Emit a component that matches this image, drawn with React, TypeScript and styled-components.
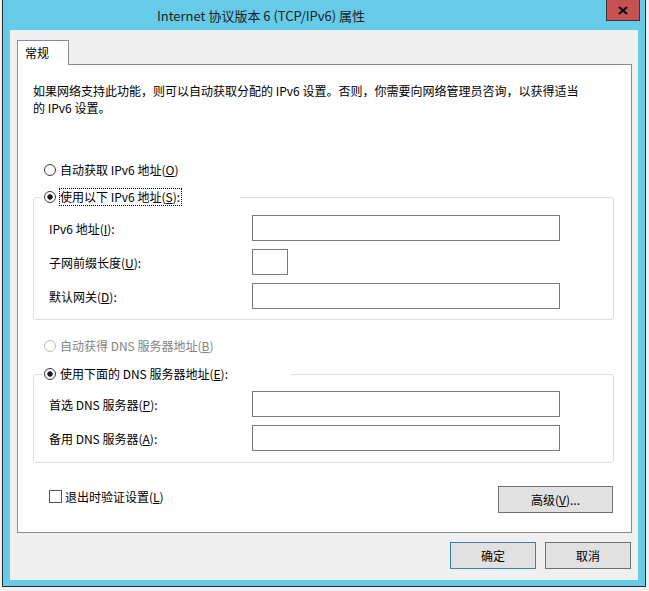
import styled, { createGlobalStyle } from "styled-components";
import type { ReactNode } from "react";

const GlobalStyle = createGlobalStyle`
  html, body {
    margin: 0;
    padding: 0;
    background: #f0f0f0;
  }
  body {
    font-family: "Noto Sans CJK SC", "Microsoft YaHei", sans-serif;
    font-size: 12px;
    color: #000;
  }
`;

const Window = styled.div`
  width: 644px;
  margin-left: 2px;
  box-sizing: border-box;
  background: #65cbe9;
  border: 1px solid #2b2b2b;
  border-top: none;
  padding: 0 7px 6px 7px;
`;

const TitleBar = styled.div`
  display: flex;
  align-items: flex-start;
  height: 30px;
  margin: 0 -7px;
`;

const Title = styled.div`
  flex: 1;
  text-align: center;
  padding: 1px 87px 0 0;
  font-size: 13px;
  line-height: 30px;
  color: #1e1e1e;
  white-space: nowrap;
`;

const CloseButton = styled.div`
  width: 34px;
  height: 21px;
  box-sizing: border-box;
  margin-right: 5px;
  background: #c75050;
  border: 1px solid #3d3535;
  border-top: none;
  display: flex;
  align-items: center;
  justify-content: center;
`;

const Client = styled.div`
  height: 550px;
  box-sizing: border-box;
  background: #f0f0f0;
  padding: 10px 6px 0 7px;
`;

const TabStrip = styled.div`
  display: flex;
  height: 24px;
`;

const Tab = styled.div`
  position: relative;
  z-index: 1;
  width: 52px;
  height: 25px;
  box-sizing: border-box;
  background: #fff;
  border: 1px solid #898c95;
  border-bottom: none;
  padding-left: 7px;
  line-height: 23px;
`;

const Panel = styled.div`
  height: 469px;
  box-sizing: border-box;
  background: #fff;
  border: 1px solid #898c95;
  padding: 17px 18px 0 15px;
`;

const Intro = styled.p`
  margin: 0 0 45px;
  line-height: 17px;
  white-space: nowrap;
`;

const RadioRow = styled.div<{ $inset: number }>`
  display: flex;
  align-items: center;
  height: 18px;
  padding-left: ${(p) => p.$inset}px;
`;

const RadioCircle = styled.span<{ $checked?: boolean; $disabled?: boolean }>`
  width: 12px;
  height: 12px;
  box-sizing: border-box;
  border-radius: 50%;
  border: 1px solid ${(p) => (p.$disabled ? "#bcbcbc" : "#3c3c3c")};
  background: ${(p) =>
    p.$checked
      ? "radial-gradient(circle at center, #1b1b1b 0 2.4px, #fff 3px)"
      : "#fff"};
`;

const RadioText = styled.span<{ $focused?: boolean; $disabled?: boolean }>`
  margin-left: 3px;
  line-height: 16px;
  border: 1px dotted ${(p) => (p.$focused ? "#000" : "transparent")};
  padding-right: 1px;
  color: ${(p) => (p.$disabled ? "#838383" : "#000")};
  white-space: nowrap;
`;

const Key = styled.u`
  text-underline-offset: 1px;
`;

const Group = styled.fieldset<{ $top: number; $bottom: number }>`
  width: 581px;
  box-sizing: border-box;
  margin: 0;
  border: 1px solid #d5dfe5;
  border-radius: 3px;
  padding: ${(p) => p.$top}px 0 ${(p) => p.$bottom}px 15px;
`;

const Legend = styled.legend<{ $width: number }>`
  width: ${(p) => p.$width}px;
  height: 20px;
  box-sizing: border-box;
  padding: 1px 0 0;
  margin-left: -7px;
`;

const FieldGrid = styled.div`
  display: grid;
  grid-template-columns: 203px auto;
  row-gap: 8px;
  align-items: center;
`;

const FieldLabel = styled.span`
  white-space: nowrap;
`;

const TextBox = styled.div<{ $width: number }>`
  width: ${(p) => p.$width}px;
  height: 26px;
  box-sizing: border-box;
  border: 1px solid #7a7a7a;
  background: #fff;
`;

const Spaced = styled.div<{ $top: number }>`
  margin-top: ${(p) => p.$top}px;
`;

const Footer = styled.div`
  display: flex;
  align-items: flex-start;
  justify-content: space-between;
  margin-top: 23px;
  width: 580px;
`;

const CheckRow = styled.label`
  display: flex;
  align-items: center;
  height: 18px;
  margin: 1px 0 0 16px;
  white-space: nowrap;
`;

const CheckBox = styled.span`
  width: 13px;
  height: 13px;
  box-sizing: border-box;
  border: 1px solid #555;
  background: #fff;
  margin-right: 3px;
`;

const Button = styled.div<{ $width: number; $default?: boolean }>`
  width: ${(p) => p.$width}px;
  height: 27px;
  box-sizing: border-box;
  background: #e1e1e1;
  border: 1px solid ${(p) => (p.$default ? "#3c7fb1" : "#707070")};
  display: flex;
  align-items: center;
  justify-content: center;
  white-space: nowrap;
`;

const DialogButtons = styled.div`
  display: flex;
  justify-content: flex-end;
  gap: 9px;
  margin: 9px 1px 0 0;
`;

type RadioProps = {
  checked?: boolean;
  disabled?: boolean;
  focused?: boolean;
  inset?: number;
  children: ReactNode;
};

const Radio = ({ checked, disabled, focused, inset = 11, children }: RadioProps) => (
  <RadioRow $inset={inset}>
    <RadioCircle $checked={checked} $disabled={disabled} />
    <RadioText $focused={focused} $disabled={disabled}>
      {children}
    </RadioText>
  </RadioRow>
);

const App = () => {
  return (
    <>
      <GlobalStyle />
      <Window>
        <TitleBar>
          <Title>Internet 协议版本 6 (TCP/IPv6) 属性</Title>
          <CloseButton>
            <svg width="10" height="9" viewBox="0 0 10 9">
              <path d="M1 1 L9 8 M9 1 L1 8" stroke="#111" strokeWidth="2.3" />
            </svg>
          </CloseButton>
        </TitleBar>
        <Client>
          <TabStrip>
            <Tab>常规</Tab>
          </TabStrip>
          <Panel>
            <Intro>
              如果网络支持此功能，则可以自动获取分配的 IPv6 设置。否则，你需要向网络管理员咨询，以获得适当
              <br />
              的 IPv6 设置。
            </Intro>

            <Radio>
              自动获取 IPv6 地址(<Key>O</Key>)
            </Radio>

            <Spaced $top={8}>
              <Group $top={8} $bottom={10}>
                <Legend $width={198}>
                  <Radio checked focused inset={2}>
                    使用以下 IPv6 地址(<Key>S</Key>):
                  </Radio>
                </Legend>
                <FieldGrid>
                  <FieldLabel>
                    IPv6 地址(<Key>I</Key>):
                  </FieldLabel>
                  <TextBox $width={308} />
                  <FieldLabel>
                    子网前缀长度(<Key>U</Key>):
                  </FieldLabel>
                  <TextBox $width={36} />
                  <FieldLabel>
                    默认网关(<Key>D</Key>):
                  </FieldLabel>
                  <TextBox $width={308} />
                </FieldGrid>
              </Group>
            </Spaced>

            <Spaced $top={17}>
              <Radio disabled>
                自动获得 DNS 服务器地址(<Key>B</Key>)
              </Radio>
            </Spaced>

            <Spaced $top={9}>
              <Group $top={7} $bottom={11}>
                <Legend $width={249}>
                  <Radio checked inset={2}>
                    使用下面的 DNS 服务器地址(<Key>E</Key>):
                  </Radio>
                </Legend>
                <FieldGrid>
                  <FieldLabel>
                    首选 DNS 服务器(<Key>P</Key>):
                  </FieldLabel>
                  <TextBox $width={308} />
                  <FieldLabel>
                    备用 DNS 服务器(<Key>A</Key>):
                  </FieldLabel>
                  <TextBox $width={308} />
                </FieldGrid>
              </Group>
            </Spaced>

            <Footer>
              <CheckRow>
                <CheckBox />
                退出时验证设置(<Key>L</Key>)
              </CheckRow>
              <Button $width={115}>
                高级(<Key>V</Key>)...
              </Button>
            </Footer>
          </Panel>
          <DialogButtons>
            <Button $width={86} $default>
              确定
            </Button>
            <Button $width={86}>取消</Button>
          </DialogButtons>
        </Client>
      </Window>
    </>
  );
};

export default App;
